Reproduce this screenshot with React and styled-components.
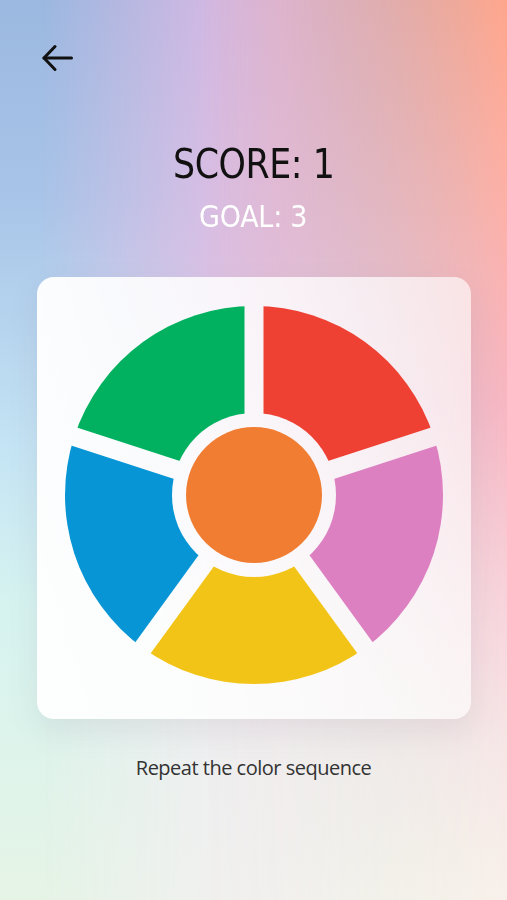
import React from 'react';
import styled, { createGlobalStyle } from 'styled-components';

const GlobalStyle = createGlobalStyle`
  html, body {
    margin: 0;
    padding: 0;
  }
  body {
    font-family: 'DejaVu Sans', 'Liberation Sans', sans-serif;
  }
`;

const Page = styled.div`
  position: relative;
  width: 507px;
  height: 900px;
  overflow: hidden;
  background: linear-gradient(180deg, #9bb8e0 0%, #a8c4e8 22%, #c5e4f4 50%, #d6f3f0 67%, #e6f4e6 100%);

  &::before,
  &::after {
    content: '';
    position: absolute;
    inset: 0;
  }

  /* lavender middle band */
  &::before {
    background: linear-gradient(180deg, #d2b8e2 0%, #d9bfe4 28%, #e6dcec 55%, #eeeef0 75%, #f0f0ef 100%);
    mask-image: linear-gradient(90deg, transparent 8%, #000 42%, #000 55%, transparent 92%);
  }

  /* peach / pink right side */
  &::after {
    background: linear-gradient(180deg, #ffa68c 0%, #fdb0a6 22%, #f7b6c2 45%, #f8d3db 67%, #f6e6e6 83%, #f8f0ea 100%);
    mask-image: linear-gradient(90deg, transparent 40%, #000 100%);
  }
`;

const Content = styled.div`
  position: relative;
  z-index: 1;
  display: flex;
  flex-direction: column;
  align-items: center;
`;

const TopBar = styled.div`
  align-self: stretch;
  display: flex;
  padding: 44px 0 0 42px;
  height: 28px;
`;

const BackButton = styled.button`
  border: none;
  background: none;
  padding: 0;
  cursor: pointer;
  display: flex;
`;

const Score = styled.h1`
  margin: 68px 0 0;
  font-size: 40px;
  font-weight: 400;
  line-height: 48px;
  color: #111;
  letter-spacing: -0.5px;
  transform: scaleX(0.87);
`;

const Goal = styled.h2`
  margin: 11px 0 0;
  font-size: 30px;
  font-weight: 400;
  line-height: 36px;
  color: #fff;
  letter-spacing: -0.3px;
  transform: scaleX(0.9);
`;

const Card = styled.div`
  margin-top: 42px;
  width: 378px;
  padding: 29px 28px 35px;
  border-radius: 17px;
  background: linear-gradient(90deg, rgba(255, 255, 255, 0.95) 0%, rgba(255, 255, 255, 0.82) 50%, rgba(255, 255, 255, 0.62) 100%);
  box-shadow: 0 12px 30px rgba(120, 110, 130, 0.12);
  display: flex;
  justify-content: center;
`;

const Hint = styled.p`
  margin: 35px 0 0;
  font-family: 'Open Sans', 'Noto Sans', sans-serif;
  font-size: 20px;
  color: #333;
  letter-spacing: -0.5px;
`;

const R = 189;
const INNER = 82;
const CORE = 68;
const GAP = 19;

const segments = [
  { color: '#ee4033', from: -90, to: -18 },
  { color: '#dc80c1', from: -18, to: 54 },
  { color: '#f3c418', from: 54, to: 126 },
  { color: '#0895d5', from: 126, to: 198 },
  { color: '#02b15f', from: 198, to: 270 },
];

const rad = (d) => (d * Math.PI) / 180;
const pt = (d, r) => `${(r * Math.cos(rad(d))).toFixed(2)} ${(r * Math.sin(rad(d))).toFixed(2)}`;

function Wheel() {
  return (
    <svg width={R * 2} height={R * 2} viewBox={`${-R} ${-R} ${R * 2} ${R * 2}`}>
      <defs>
        <mask id="wheel-gaps">
          <rect x={-R} y={-R} width={R * 2} height={R * 2} fill="#fff" />
          {segments.map((s) => (
            <line
              key={s.from}
              x1="0"
              y1="0"
              x2={(R + 10) * Math.cos(rad(s.from))}
              y2={(R + 10) * Math.sin(rad(s.from))}
              stroke="#000"
              strokeWidth={GAP}
            />
          ))}
          <circle r={INNER} fill="#000" />
        </mask>
      </defs>
      <g mask="url(#wheel-gaps)">
        {segments.map((s) => (
          <path
            key={s.color}
            fill={s.color}
            d={`M0 0 L${pt(s.from, R)} A${R} ${R} 0 0 1 ${pt(s.to, R)} Z`}
          />
        ))}
      </g>
      <circle r={CORE} fill="#f17d33" />
    </svg>
  );
}

export default function App() {
  return (
    <>
      <GlobalStyle />
      <Page>
        <Content>
          <TopBar>
            <BackButton aria-label="Back">
              <svg width="31" height="28" viewBox="0 0 31 28" fill="none" stroke="#111" strokeWidth="3" strokeLinecap="round" strokeLinejoin="round">
                <path d="M29.5 14H2" />
                <path d="M13 2.5L2 14l11 11.5" />
              </svg>
            </BackButton>
          </TopBar>
          <Score>SCORE: 1</Score>
          <Goal>GOAL: 3</Goal>
          <Card>
            <Wheel />
          </Card>
          <Hint>Repeat the color sequence</Hint>
        </Content>
      </Page>
    </>
  );
}
